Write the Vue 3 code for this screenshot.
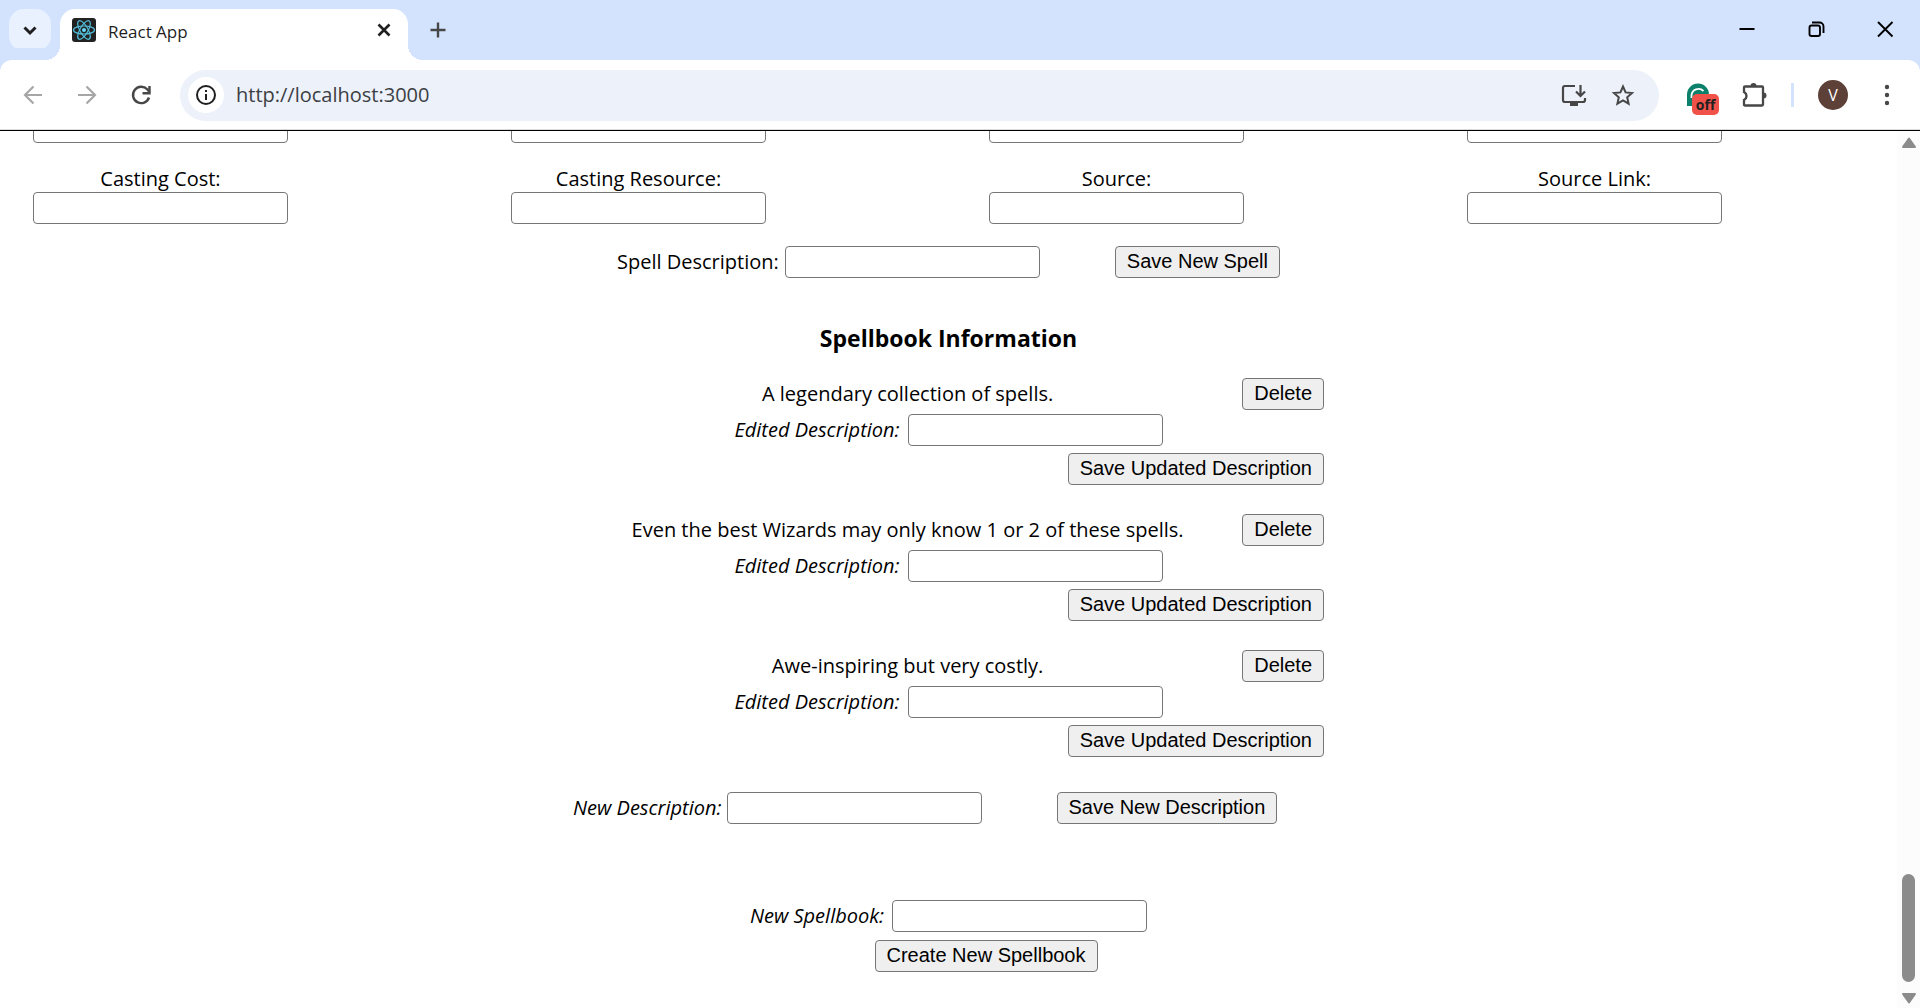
<script setup>
import { ref } from 'vue'

const url = ref('http://localhost:3000')
const spellFields = ['Casting Cost:', 'Casting Resource:', 'Source:', 'Source Link:']
const descriptions = [
  'A legendary collection of spells.',
  'Even the best Wizards may only know 1 or 2 of these spells.',
  'Awe-inspiring but very costly.',
]
</script>

<template>
  <div class="browser">
    <header class="tab-strip">
      <button class="tab-search" aria-label="Search tabs">
        <svg width="42" height="42" viewBox="0 0 42 42"><path d="M15.500 18.500l5.500 5.500 5.500-5.500" fill="none" stroke="#1f1f1f" stroke-width="3" /></svg>
      </button>
      <div class="tab">
        <svg width="24" height="24" viewBox="0 0 24 24" aria-hidden="true">
          <rect width="24" height="24" rx="3" fill="#222" />
          <g fill="none" stroke="#53c1de" stroke-width="1.200">
            <ellipse cx="12" cy="12" rx="10.500" ry="4" />
            <ellipse cx="12" cy="12" rx="10.500" ry="4" transform="rotate(60 12 12)" />
            <ellipse cx="12" cy="12" rx="10.500" ry="4" transform="rotate(120 12 12)" />
          </g>
          <circle cx="12" cy="12" r="2" fill="#61dafb" />
        </svg>
        <span class="tab-title">React App</span>
        <button class="bare" aria-label="Close tab">
          <svg width="24" height="24" viewBox="0 0 24 24"><path d="M6.500 6.500l11 11M17.500 6.500l-11 11" stroke="#1f1f1f" stroke-width="2.600" /></svg>
        </button>
      </div>
      <button class="bare new-tab" aria-label="New tab">
        <svg width="24" height="24" viewBox="0 0 24 24"><path d="M12 4.500v15M4.500 12h15" stroke="#474747" stroke-width="2.400" /></svg>
      </button>
      <div class="window-buttons">
        <button class="bare" aria-label="Minimize">
          <svg width="24" height="24" viewBox="0 0 24 24"><path d="M4.500 12h15" stroke="#000" stroke-width="2" /></svg>
        </button>
        <button class="bare" aria-label="Restore">
          <svg width="24" height="24" viewBox="0 0 24 24" fill="none" stroke="#000" stroke-width="1.900"><rect x="5.500" y="8.500" width="10.500" height="10.500" rx="2" /><path d="M8 5.500h7.500a4 4 0 0 1 4 4V16" /></svg>
        </button>
        <button class="bare" aria-label="Close">
          <svg width="24" height="24" viewBox="0 0 24 24"><path d="M5 5l14.500 14.500M19.500 5L5 19.500" stroke="#000" stroke-width="1.900" /></svg>
        </button>
      </div>
    </header>

    <nav class="toolbar">
      <div class="nav-buttons">
        <button class="bare" aria-label="Back">
          <svg width="24" height="24" viewBox="0 0 24 24" fill="none" stroke="#a6a6a6" stroke-width="2.200"><path d="M21 12H5M12.500 3.500L4 12l8.500 8.500" /></svg>
        </button>
        <button class="bare" aria-label="Forward">
          <svg width="24" height="24" viewBox="0 0 24 24" fill="none" stroke="#a6a6a6" stroke-width="2.200"><path d="M3 12h16M11.500 3.500L20 12l-8.500 8.500" /></svg>
        </button>
        <button class="bare" aria-label="Reload">
          <svg width="24" height="24" viewBox="0 0 24 24" fill="none" stroke="#474747" stroke-width="2.400"><path d="M20 14.500a8.200 8.200 0 1 1-1.800-8.200L20.500 9" /><path d="M20.500 3v7.200h-7" /></svg>
        </button>
      </div>
      <div class="address">
        <button class="site-info" aria-label="View site information">
          <svg width="24" height="24" viewBox="0 0 24 24"><circle cx="12" cy="12" r="9" fill="none" stroke="#1f1f1f" stroke-width="2" /><path d="M12 11v6M12 7v2" stroke="#1f1f1f" stroke-width="2" /></svg>
        </button>
        <input v-model="url" class="url" aria-label="Address" />
        <button class="bare" aria-label="Install app">
          <svg width="26" height="24" viewBox="0 0 26 24" fill="none" stroke="#474747" stroke-width="2.200"><path d="M14 3H4a2 2 0 0 0-2 2v12a2 2 0 0 0 2 2h18a2 2 0 0 0 2-2v-2M19.500 2v10M15 8.500l4.500 4.500L24 8.500" /><path d="M9 19h8v4H9z" fill="#474747" stroke="none" /></svg>
        </button>
        <button class="bare" aria-label="Bookmark this tab">
          <svg width="24" height="24" viewBox="0 0 24 24"><path d="M12 3.500l2.600 5.900 6.400.6-4.800 4.300 1.400 6.300-5.600-3.300-5.600 3.300 1.400-6.300L3 10l6.400-.6z" fill="none" stroke="#474747" stroke-width="2" /></svg>
        </button>
      </div>
      <div class="tools">
        <button class="bare extension" aria-label="Extension">
          <svg width="24" height="24" viewBox="0 0 24 24"><path d="M1 23V11.500a11 11 0 0 1 22 0V14H7v9z" fill="#0b806a" /><path d="M5.500 15v-2.500a7 7 0 0 1 12-4.500" fill="none" stroke="#fff" stroke-width="1.800" /></svg>
          <span class="badge">off</span>
        </button>
        <button class="bare" aria-label="Extensions">
          <svg width="26" height="26" viewBox="0 0 26 26"><path d="M4 4.500h17q1 0 1 1v17q0 1-1 1H4q-1 0-1-1v-4.500a4.500 4.500 0 0 0 0-8v-4.500q0-1 1-1z" fill="none" stroke="#474747" stroke-width="2.300" /><path d="M9.500 4a3 3 0 0 1 6 0zM22.500 10.500a3 3 0 0 1 0 6z" fill="#474747" /></svg>
        </button>
        <span class="divider"></span>
        <button class="avatar" aria-label="Profile">V</button>
        <button class="bare menu" aria-label="Menu">
          <svg width="24" height="24" viewBox="0 0 24 24" fill="#474747"><circle cx="12" cy="4" r="2.200" /><circle cx="12" cy="12" r="2.200" /><circle cx="12" cy="20" r="2.200" /></svg>
        </button>
      </div>
    </nav>

    <div class="viewport">
      <main>
        <div class="fields cut">
          <input v-for="name in spellFields" :key="name" type="text" :aria-label="'Above ' + name" />
        </div>
        <div class="fields">
          <label v-for="name in spellFields" :key="name" class="field">{{ name }}<input type="text" /></label>
        </div>
        <div class="line spell">
          <label class="pair">Spell Description: <input type="text" /></label>
          <button class="push">Save New Spell</button>
        </div>

        <h3>Spellbook Information</h3>

        <section class="book">
          <article v-for="text in descriptions" :key="text" class="entry">
            <div class="line">
              <span class="text">{{ text }}</span>
              <button>Delete</button>
            </div>
            <div class="line edit">
              <label class="pair italic">Edited Description: <input type="text" /></label>
            </div>
            <div class="line end">
              <button>Save Updated Description</button>
            </div>
          </article>
          <div class="line start">
            <label class="pair italic tight">New Description:<input type="text" /></label>
            <button class="push">Save New Description</button>
          </div>
        </section>

        <section class="create">
          <label class="pair italic">New Spellbook: <input type="text" /></label>
          <button class="push">Create New Spellbook</button>
        </section>
      </main>

      <aside class="scrollbar" aria-hidden="true">
        <svg width="16" height="12" viewBox="0 0 16 12"><path d="M8 1.500L14 10H2z" fill="#8b8b8b" stroke="#8b8b8b" stroke-width="2" stroke-linejoin="round" /></svg>
        <span class="thumb"></span>
        <svg width="16" height="12" viewBox="0 0 16 12"><path d="M8 10.500L14 2H2z" fill="#8b8b8b" stroke="#8b8b8b" stroke-width="2" stroke-linejoin="round" /></svg>
      </aside>
    </div>
  </div>
</template>

<style>
body {
  margin: 0;
}
</style>

<style scoped>
* {
  box-sizing: border-box;
}
.browser {
  display: flex;
  flex-direction: column;
  min-height: 100vh;
  background: #fff;
  color: #000;
  font: 20px/26px "Open Sans", "Noto Sans", sans-serif;
}
svg {
  display: block;
}
button {
  height: 32px;
  padding: 0 11px 2px;
  border: 1px solid #767676;
  border-radius: 4px;
  background: #efefef;
  color: #000;
  font: 20px/28px "Liberation Sans", Arial, sans-serif;
  white-space: nowrap;
}
input {
  width: 255px;
  height: 32px;
  padding: 0 4px;
  border: 1px solid #767676;
  border-radius: 4px;
  background: #fff;
  font: 20px "Liberation Sans", Arial, sans-serif;
}
.bare {
  display: flex;
  height: auto;
  padding: 0;
  border: 0;
  background: none;
}

.tab-strip {
  display: flex;
  align-items: center;
  height: 60px;
  padding: 0 23px 0 9px;
  background: #d3e3fd;
}
.tab-search {
  width: 42px;
  height: 42px;
  padding: 0;
  border: 0;
  border-radius: 15px;
  background: #e9f1fe;
}
.tab {
  position: relative;
  display: flex;
  align-items: center;
  align-self: flex-end;
  width: 348px;
  height: 51px;
  margin-left: 9px;
  padding: 0 12px 9px;
  border-radius: 15px 15px 0 0;
  background: #fff;
}
.tab::before,
.tab::after {
  content: "";
  position: absolute;
  bottom: 0;
  width: 15px;
  height: 15px;
}
.tab::before {
  right: 100%;
  background: radial-gradient(circle at 0 0, transparent 15px, #fff 15px);
}
.tab::after {
  left: 100%;
  background: radial-gradient(circle at 100% 0, transparent 15px, #fff 15px);
}
.tab-title {
  flex: 1;
  padding: 4px 0 0 12px;
  color: #1f1f1f;
  font-size: 17px;
}
.new-tab {
  margin-left: 18px;
}
.window-buttons {
  display: flex;
  gap: 45px;
  margin-left: auto;
  padding-bottom: 2px;
}

.toolbar {
  display: flex;
  align-items: center;
  height: 71px;
  padding: 0 21px;
  border-bottom: 1px solid #000;
  border-radius: 12px 12px 0 0;
  background: #fff;
  box-shadow: 0 -12px 0 0 #d3e3fd, inset 0 -1px #dadce0;
}
.nav-buttons {
  display: flex;
  gap: 30px;
}
.address {
  display: flex;
  flex: 1;
  align-items: center;
  gap: 24px;
  height: 51px;
  margin-left: 27px;
  padding: 0 24px 0 8px;
  border-radius: 26px;
  background: #ecf1fa;
}
.site-info {
  display: flex;
  align-items: center;
  justify-content: center;
  width: 36px;
  height: 36px;
  padding: 0;
  border: 0;
  border-radius: 50%;
  background: #fff;
}
.url {
  flex: 1;
  margin-left: -12px;
  padding: 0 0 2px;
  border: 0;
  background: none;
  color: #3c3f43;
  font: 20px "Open Sans", "Noto Sans", sans-serif;
}
.tools {
  display: flex;
  align-items: center;
  gap: 24px;
  margin-left: 27px;
}
.extension {
  position: relative;
  margin-right: 7px;
}
.menu {
  margin-left: 3px;
}
.badge {
  position: absolute;
  top: 11px;
  left: 6px;
  width: 27px;
  height: 21px;
  border-radius: 5px;
  background: #f0524a;
  color: #1f1f1f;
  font: 700 14px/22px "Open Sans", "Noto Sans", sans-serif;
}
.divider {
  width: 3px;
  height: 24px;
  background: #d3e3fd;
}
.avatar {
  width: 30px;
  height: 30px;
  padding: 0;
  border: 0;
  border-radius: 50%;
  background: #5d4037;
  color: #fff;
  font: 16px/30px "Open Sans", "Noto Sans", sans-serif;
}

.viewport {
  display: flex;
  flex: 1;
}
main {
  flex: 1;
}
.fields {
  display: flex;
  justify-content: space-between;
  padding: 0 175px 0 33px;
}
.cut {
  overflow: hidden;
  height: 12px;
  align-items: flex-end;
  margin-bottom: 23px;
}
.field {
  display: flex;
  flex-direction: column;
  align-items: center;
}
.line {
  display: flex;
  align-items: center;
  justify-content: center;
}
.spell {
  margin-top: 22px;
}
.pair {
  display: flex;
  align-items: center;
  gap: 6px;
}
.italic {
  gap: 8px;
  font-style: italic;
}
.tight {
  gap: 5px;
}
.push {
  margin-left: 75px;
}
h3 {
  margin: 44px 0 24px;
  font-size: 23px;
  line-height: 32px;
  text-align: center;
}
.book {
  max-width: 751px;
  margin: 0 auto;
}
.entry {
  display: flow-root;
  margin-bottom: 29px;
}
.text {
  flex: 1;
  text-align: center;
}
.edit {
  margin: 4px 0 7px;
}
.end {
  justify-content: flex-end;
}
.start {
  justify-content: flex-start;
  margin-top: 35px;
}
.create {
  display: flex;
  flex-direction: column;
  align-items: center;
  gap: 8px;
  margin-top: 76px;
}
.scrollbar {
  display: flex;
  flex-direction: column;
  align-items: center;
  width: 23px;
  padding: 6px 0 4px;
  background: #fcfcfc;
}
.thumb {
  width: 13px;
  height: 108px;
  margin: auto 0 10px;
  border-radius: 7px;
  background: #8b8b8b;
}
</style>
